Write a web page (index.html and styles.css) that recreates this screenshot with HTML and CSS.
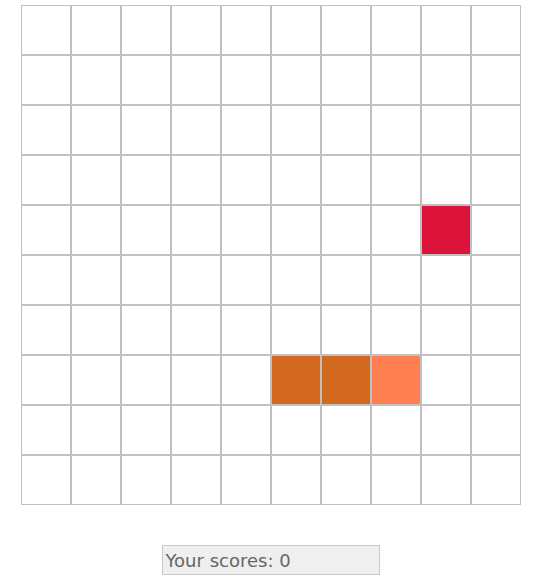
FILE: index.html
```
<!DOCTYPE html>
<html lang="en">
<head>
    <meta charset="UTF-8">
    <meta name="viewport" content="width=device-width, initial-scale=1.0">
    <title>Snake</title>
    <link rel="stylesheet" href="styles.css">
</head>
<body>
    <div class="field" id="field"></div>
    <div class="score">Your scores: <span id="score">0</span></div>
    <script>
        const size = 10;
        const snake = [[7, 5], [7, 6], [7, 7]];
        const food = [4, 8];
        const field = document.getElementById('field');

        for (let y = 0; y < size; y++) {
            for (let x = 0; x < size; x++) {
                const cell = document.createElement('div');
                cell.className = 'cell';
                snake.forEach((part, i) => {
                    if (part[0] === y && part[1] === x) {
                        cell.classList.add(i === snake.length - 1 ? 'head' : 'body');
                    }
                });
                if (food[0] === y && food[1] === x) {
                    cell.classList.add('food');
                }
                field.appendChild(cell);
            }
        }
    </script>
</body>
</html>
```

FILE: styles.css
```
body {
    margin: 0;
    padding-top: 5px;
    font-family: "DejaVu Sans", Verdana, sans-serif;
    background: white;
}
.field {
    display: grid;
    grid-template-columns: repeat(10, 50px);
    width: 500px;
    margin: 0 auto;
    padding-left: 1px;
}
.cell {
    width: 48px;
    height: 48px;
    border: 1px solid #c0c0c0;
}
.cell.body {
    background-color: #d2691e;
}
.cell.head {
    background-color: #ff7f50;
}
.cell.food {
    background-color: #dc143c;
}
.score {
    width: 213px;
    height: 28px;
    margin: 40px auto 0;
    padding-left: 3px;
    border: 1px solid #c8c8c8;
    background-color: #efefef;
    color: #666;
    font-size: 18px;
    line-height: 30px;
}
```
